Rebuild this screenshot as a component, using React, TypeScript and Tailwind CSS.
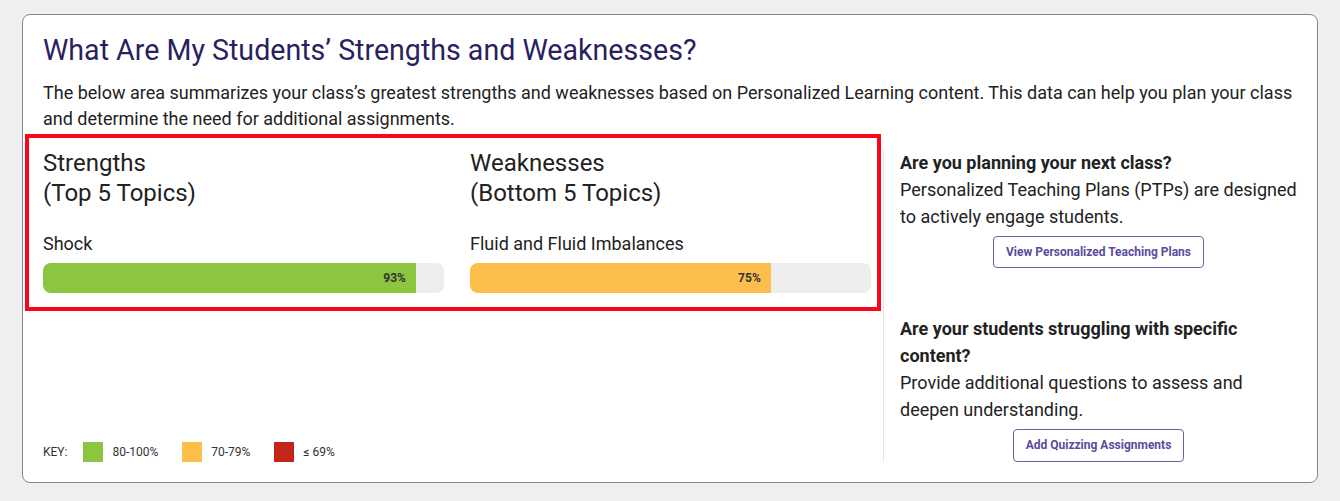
const topics = {
  strengths: [{ name: "Shock", score: 93 }],
  weaknesses: [{ name: "Fluid and Fluid Imbalances", score: 75 }],
};

const barColor = (score: number) =>
  score >= 80 ? "bg-[#8cc63f]" : score >= 70 ? "bg-[#fdbf4b]" : "bg-[#c4261a]";

const TopicBar = ({ name, score }: { name: string; score: number }) => (
  <div className="mt-6">
    <div className="text-[18px] leading-6 text-[#222]">{name}</div>
    <div className="mt-[7px] h-[30px] w-full overflow-hidden rounded-lg bg-[#eeeeee]">
      <div
        className={`flex h-full items-center justify-end pr-[10px] ${barColor(score)}`}
        style={{ width: `${score}%` }}
      >
        <span className="text-[12px] font-bold text-[#333]">{score}%</span>
      </div>
    </div>
  </div>
);

const TopicColumn = ({
  title,
  subtitle,
  items,
}: {
  title: string;
  subtitle: string;
  items: { name: string; score: number }[];
}) => (
  <div>
    <h3 className="text-[24px] leading-[30px] text-[#222]">
      {title}
      <br />
      {subtitle}
    </h3>
    {items.map((t) => (
      <TopicBar key={t.name} {...t} />
    ))}
  </div>
);

const KeyItem = ({ color, label }: { color: string; label: string }) => (
  <div className="flex items-center gap-[9px]">
    <span className={`h-5 w-5 ${color}`} />
    <span>{label}</span>
  </div>
);

export default function App() {
  return (
    <div
      className="min-h-[501px] bg-[#efefef] px-[22px] pt-[14px]"
      style={{ fontFamily: "Roboto, 'Noto Sans', sans-serif" }}
    >
      <div className="rounded-lg border border-[#7d8893] bg-white pb-5">
        <div className="px-5 pt-[17px]">
          <h2 className="text-[28.6px] leading-9 text-[#2a1f60]">
            What Are My Students’ Strengths and Weaknesses?
          </h2>
          <p className="mt-3 text-[18px] leading-[26px] text-[#222]">
            The below area summarizes your class’s greatest strengths and weaknesses based on
            Personalized Learning content. This data can help you plan your class and determine
            the need for additional assignments.
          </p>
        </div>

        <div className="mt-[2px] flex pl-[2px]">
          {/* left: topics + key */}
          <div className="flex w-[856px] shrink-0 flex-col justify-between">
            <div className="border-4 border-[#f8061a] pb-[14px] pl-[14px] pr-[6px] pt-[10px]">
              <div className="grid grid-cols-2 gap-[26px]">
                <TopicColumn title="Strengths" subtitle="(Top 5 Topics)" items={topics.strengths} />
                <TopicColumn
                  title="Weaknesses"
                  subtitle="(Bottom 5 Topics)"
                  items={topics.weaknesses}
                />
              </div>
            </div>
            <div className="flex items-center gap-6 pl-[18px] text-[12px] text-[#333]">
              <span className="-mr-2">KEY:</span>
              <KeyItem color="bg-[#8cc63f]" label="80-100%" />
              <KeyItem color="bg-[#fdbf4b]" label="70-79%" />
              <KeyItem color="bg-[#c4261a]" label="≤ 69%" />
            </div>
          </div>

          {/* right: suggestions */}
          <div className="ml-[2px] mt-[15px] flex-1 border-l border-[#e6e6e6] pl-4 pr-5 text-[18px] leading-[27px] text-[#222]">
            <p className="font-bold">Are you planning your next class?</p>
            <p>Personalized Teaching Plans (PTPs) are designed to actively engage students.</p>
            <div className="mt-[6px] flex justify-center">
              <button className="h-8 rounded border border-[#6e5fa8] px-3 text-[12px] font-bold text-[#5b4a9e]">
                View Personalized Teaching Plans
              </button>
            </div>

            <p className="mt-[47px] font-bold">
              Are your students struggling with specific content?
            </p>
            <p>Provide additional questions to assess and deepen understanding.</p>
            <div className="mt-[6px] flex justify-center">
              <button className="h-[33px] rounded border border-[#6e5fa8] px-3 text-[12px] font-bold text-[#5b4a9e]">
                Add Quizzing Assignments
              </button>
            </div>
          </div>
        </div>
      </div>
    </div>
  );
}
